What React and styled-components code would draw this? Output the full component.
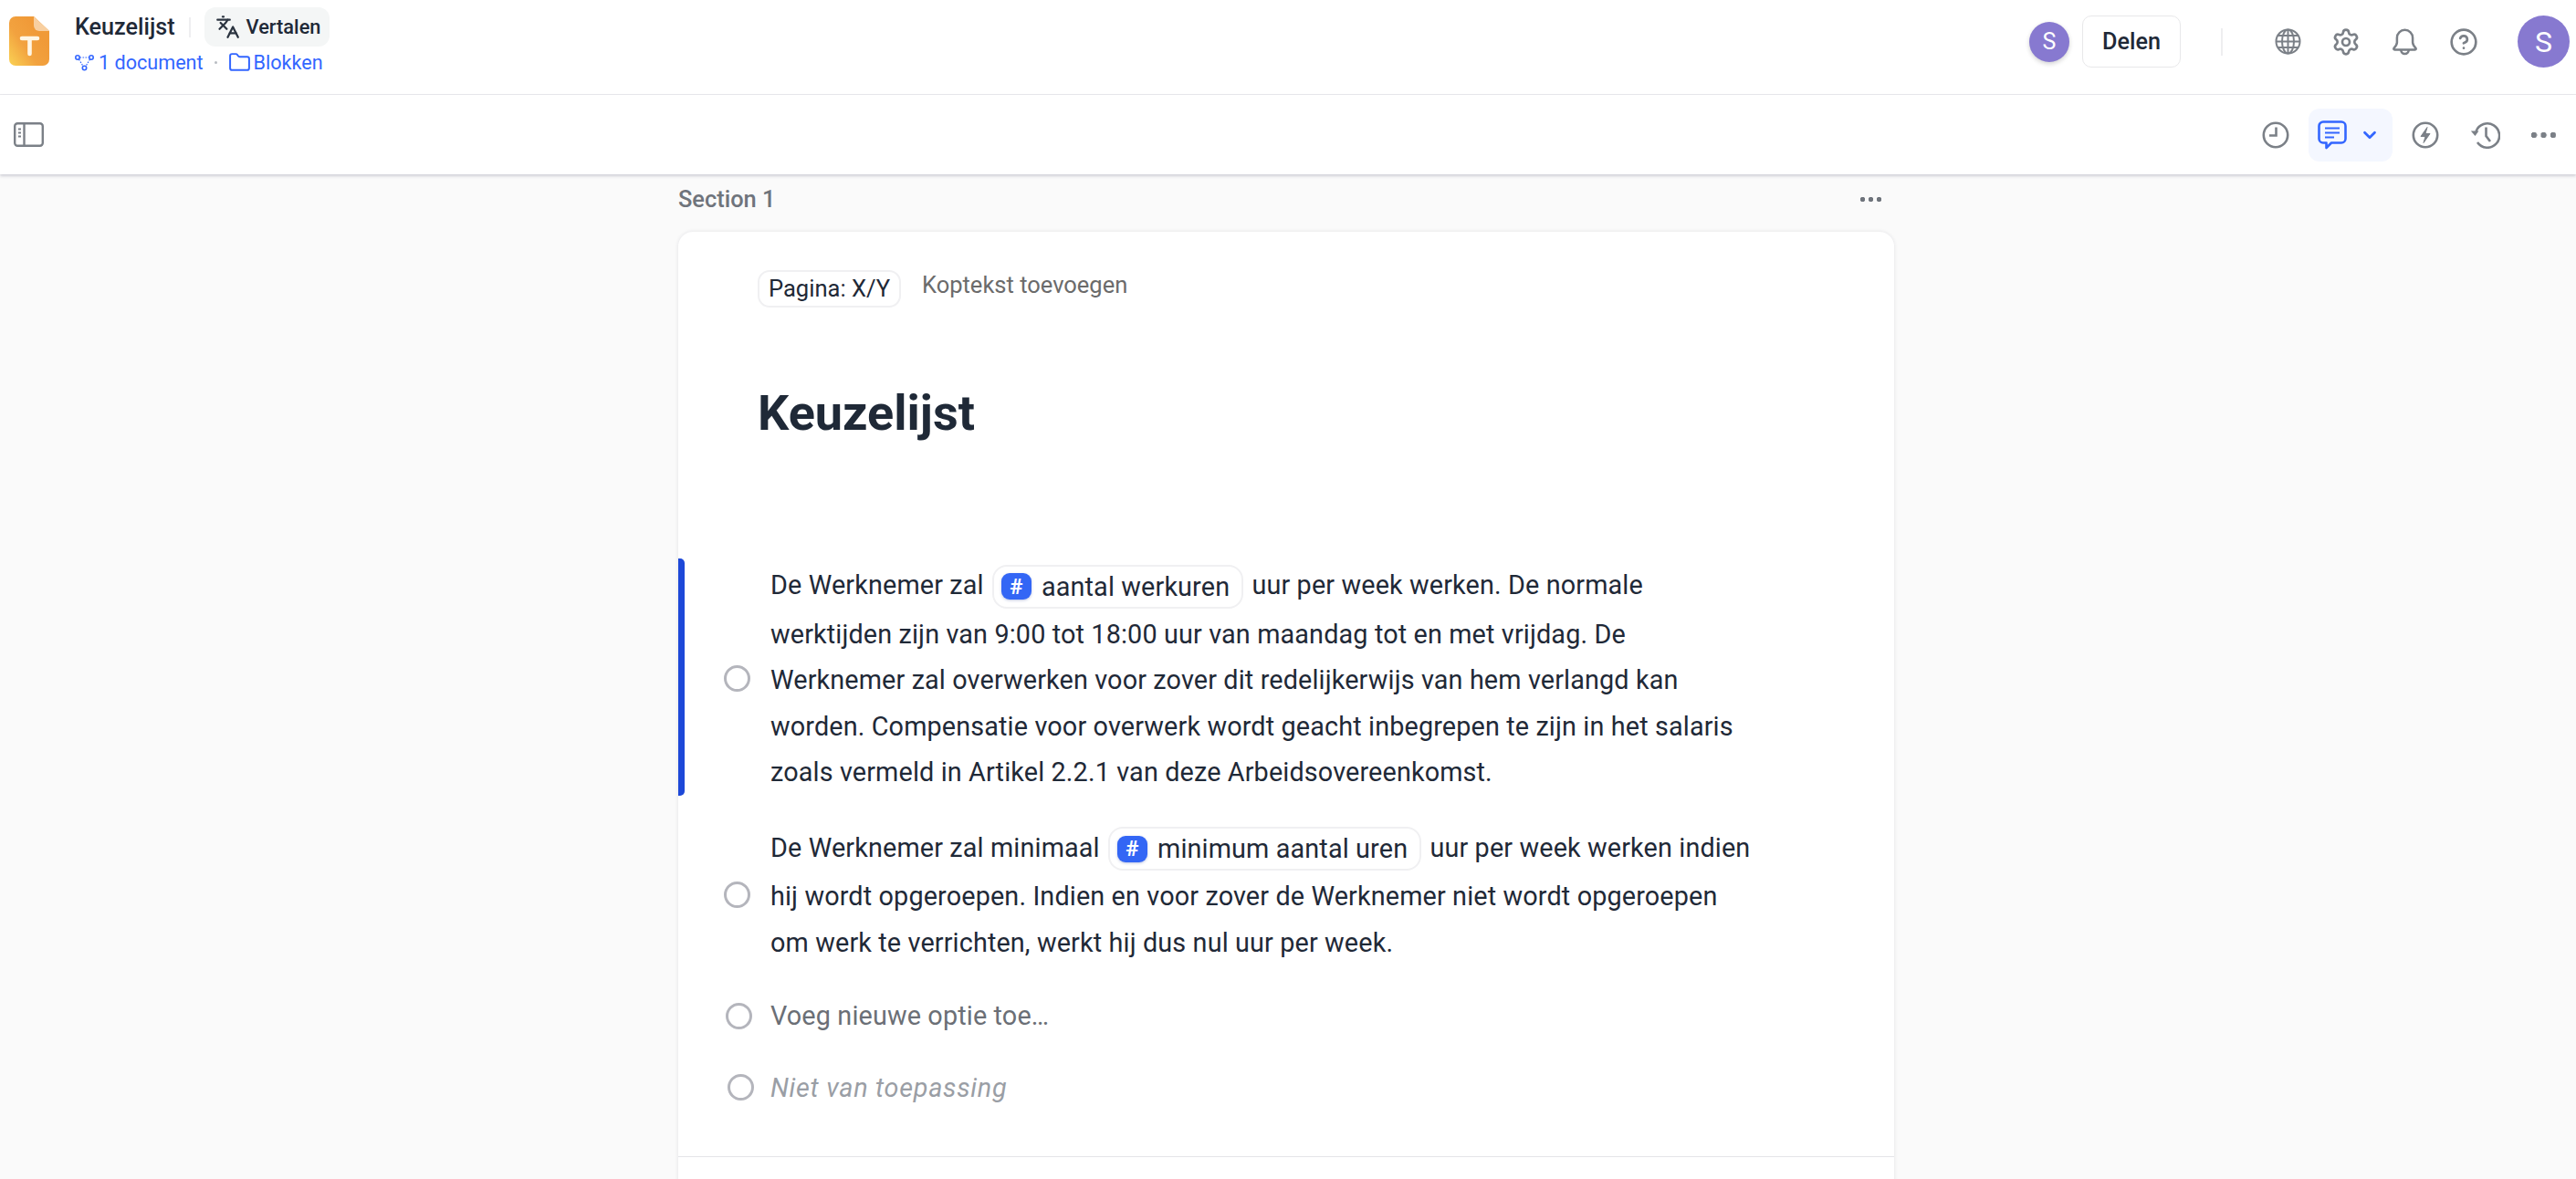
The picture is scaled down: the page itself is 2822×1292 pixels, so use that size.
import React from "react";
import styled, { createGlobalStyle } from "styled-components";
import { Settings, CircleHelp, Folder, Languages, ChevronDown } from "lucide-react";

const GlobalStyle = createGlobalStyle`
html, body {
    margin: 0;
    padding: 0;
    background: #FAFAFA;
    font-family: Roboto, "Liberation Sans", sans-serif;
    color: #1F2937;
}
body {
    height: 1292px;
    overflow: hidden;
}
* {
    box-sizing: border-box;
}
`

function LogoIcon() {
    return (
        <svg width="44" height="54" viewBox="0 0 44 54">
            <defs>
                <linearGradient id="logoFill" x1="0" y1="1" x2="0.75" y2="0.35">
                    <stop offset="0" stopColor="#FAD254" />
                    <stop offset="0.55" stopColor="#F2A23F" />
                    <stop offset="1" stopColor="#F09A38" />
                </linearGradient>
            </defs>
            <path d="M7 0H27L44 16V47a7 7 0 0 1-7 7H7a7 7 0 0 1-7-7V7a7 7 0 0 1 7-7Z" fill="url(#logoFill)" />
            <path d="M27 0L44 16H33a6 6 0 0 1-6-6Z" fill="#F8CFA0" />
            <path d="M14 24H31M22.5 24V41" stroke="#FFF6E4" strokeWidth="4.6" strokeLinecap="round" fill="none" />
        </svg>
    )
}

function NodesIcon() {
    return (
        <svg width="21" height="19" viewBox="0 0 21 19" fill="none" stroke="#3366FF" strokeWidth="1.6">
            <circle cx="3" cy="4" r="2.2" />
            <circle cx="18" cy="4" r="2.2" />
            <circle cx="10.5" cy="15.5" r="2.2" />
            <path d="M5.5 4H15.5M4.5 6L9 13.5M16.5 6L12 13.5" strokeDasharray="1.6 1.4" strokeWidth="1.2" />
        </svg>
    )
}

function PanelIcon() {
    return (
        <svg width="33" height="27" viewBox="0 0 33 27" fill="none" stroke="#7B8087" strokeWidth="2.4">
            <rect x="1.2" y="1.2" width="30.6" height="24.6" rx="3" />
            <path d="M11.5 1.5V25.5" />
            <path d="M5 7.5H8M5 11.5H8M5 15.5H8" strokeWidth="1.8" />
        </svg>
    )
}

function GlobeIcon() {
    return (
        <svg width="29" height="29" viewBox="0 0 29 29" fill="none" stroke="#7B8087" strokeWidth="2">
            <circle cx="14.5" cy="14.5" r="13" />
            <ellipse cx="14.5" cy="14.5" rx="6.5" ry="13" />
            <path d="M14.5 1.5V27.5M1.5 14.5H27.5M3.5 8H25.5M3.5 21H25.5" />
        </svg>
    )
}

function BellIcon() {
    return (
        <svg width="31" height="30" viewBox="-1.5 0 31 30" fill="none" stroke="#7B8087" strokeWidth="2.5" strokeLinejoin="round">
            <path d="M14 1.8a8.6 8.6 0 0 0-8.6 8.6v5.2c0 2.4-1.4 4-3.2 6-.8.9-.4 1.9.7 1.9h22.2c1.1 0 1.5-1 .7-1.9-1.8-2-3.2-3.6-3.2-6v-5.2A8.6 8.6 0 0 0 14 1.8Z" />
            <path d="M9.8 23.8a4.2 4.2 0 0 0 8.4 0" />
        </svg>
    )
}

function ClockIcon() {
    return (
        <svg width="30" height="30" viewBox="0 0 30 30" fill="none" stroke="#7B8087" strokeWidth="2.6">
            <circle cx="15" cy="15" r="13.2" />
            <path d="M15.5 6.5V15.5H8" />
        </svg>
    )
}

function CommentIcon() {
    return (
        <svg width="32" height="32" viewBox="0 0 32 32" fill="none" stroke="#3366FF" strokeWidth="2.6" strokeLinejoin="round">
            <path d="M6 1.5H26a4.5 4.5 0 0 1 4.5 4.5V20a4.5 4.5 0 0 1-4.5 4.5H15L9.5 30V24.5H6A4.5 4.5 0 0 1 1.5 20V6A4.5 4.5 0 0 1 6 1.5Z" />
            <path d="M8 8.5H24M8 13.5H24M8 18.5H18" strokeWidth="2" />
        </svg>
    )
}

function BoltIcon() {
    return (
        <svg width="30" height="30" viewBox="0 0 30 30" fill="none" stroke="#7B8087" strokeWidth="2.6">
            <circle cx="15" cy="15" r="13.2" />
            <path d="M17 6.5L10 16.5H15L13 23.5L20 13.5H15Z" fill="#7B8087" strokeWidth="1" strokeLinejoin="round" />
        </svg>
    )
}

function HistoryIcon() {
    return (
        <svg width="33" height="30" viewBox="0 0 33 30" fill="none" stroke="#7B8087" strokeWidth="2.6">
            <path d="M6.5 11A13.2 13.2 0 1 1 8 23" />
            <path d="M0.8 10.5H9.5L5.5 16Z" fill="#7B8087" stroke="none" />
            <path d="M17.5 6.5V16L22 22" />
        </svg>
    )
}

export default function App() {
    return (
        <>
        <GlobalStyle />
        <Header>
            <LogoSlot><LogoIcon /></LogoSlot>
            <TitleBlock>
                <TitleRow>
                    <Title>Keuzelijst</Title>
                    <VerticalLine />
                    <TranslateButton>
                        <Languages size={27} color="#2B3440" strokeWidth={2} />
                        Vertalen
                    </TranslateButton>
                </TitleRow>
                <LinkRow>
                    <NodesIcon />
                    <LinkText>1 document</LinkText>
                    <Dot />
                    <Folder size={25} color="#3366FF" strokeWidth={1.9} />
                    <FolderText>Blokken</FolderText>
                </LinkRow>
            </TitleBlock>
            <HeaderRight>
                <SmallAvatar>S</SmallAvatar>
                <ShareButton>Delen</ShareButton>
                <HeaderDivider />
                <HeaderIcons>
                    <GlobeIcon />
                    <Settings size={32} color="#7B8087" strokeWidth={2} />
                    <BellIcon />
                    <CircleHelp size={32} color="#7B8087" strokeWidth={2} />
                </HeaderIcons>
                <BigAvatar>S</BigAvatar>
            </HeaderRight>
        </Header>

        <Toolbar>
            <PanelIcon />
            <ToolbarRight>
                <ClockIcon />
                <CommentButton>
                    <CommentIcon />
                    <ChevronDown size={22} color="#3366FF" strokeWidth={3} />
                </CommentButton>
                <BoltIcon />
                <HistoryIcon />
                <MoreDots />
            </ToolbarRight>
        </Toolbar>

        <Canvas>
            <SectionRow>
                <SectionName>Section 1</SectionName>
                <SectionDots />
            </SectionRow>
            <Card>
                <HeaderLine>
                    <PagePill>Pagina: X/Y</PagePill>
                    <HeaderHint>Koptekst toevoegen</HeaderHint>
                </HeaderLine>
                <Heading>Keuzelijst</Heading>

                <Option $active $top={127}>
                    <Radio />
                    <OptionText>
                        De Werknemer zal <Chip><Hash>#</Hash>aantal werkuren</Chip> uur per week werken. De normale<br />
                        werktijden zijn van 9:00 tot 18:00 uur van maandag tot en met vrijdag. De<br />
                        Werknemer zal overwerken voor zover dit redelijkerwijs van hem verlangd kan<br />
                        worden. Compensatie voor overwerk wordt geacht inbegrepen te zijn in het salaris<br />
                        zoals vermeld in Artikel 2.2.1 van deze Arbeidsovereenkomst.
                    </OptionText>
                </Option>

                <Option $top={32}>
                    <Radio />
                    <OptionText>
                        De Werknemer zal minimaal <Chip><Hash>#</Hash>minimum aantal uren</Chip> uur per week werken indien<br />
                        hij wordt opgeroepen. Indien en voor zover de Werknemer niet wordt opgeroepen<br />
                        om werk te verrichten, werkt hij dus nul uur per week.
                    </OptionText>
                </Option>

                <Option $top={30}>
                    <Radio $nudge={2} />
                    <AddText>Voeg nieuwe optie toe…</AddText>
                </Option>

                <Option $top={28}>
                    <Radio $nudge={4} />
                    <NotApplicable>Niet van toepassing</NotApplicable>
                </Option>

                <CardDivider />
            </Card>
        </Canvas>
        </>
    )
}

const Header = styled.header`
height: 104px;
background: #FFFFFF;
border-bottom: 1px solid #E9E9EC;
display: flex;
align-items: flex-start;
padding-left: 10px;
`

const LogoSlot = styled.div`
width: 72px;
padding-top: 18px;
line-height: 0;
`

const TitleBlock = styled.div`
display: flex;
flex-direction: column;
`

const TitleRow = styled.div`
display: flex;
align-items: center;
height: 43px;
margin-top: 8px;
`

const Title = styled.span`
font-size: 25.2px;
font-weight: 500;
color: #1F2937;
`

const VerticalLine = styled.span`
width: 2px;
height: 22px;
background: #EEEEF0;
margin: 0 15px;
`

const TranslateButton = styled.div`
height: 43px;
padding: 0 10px 0 12px;
border-radius: 12px;
background: #F4F6F6;
display: flex;
align-items: center;
gap: 7px;
font-size: 21.8px;
font-weight: 500;
color: #1F2937;
`

const LinkRow = styled.div`
display: flex;
align-items: center;
height: 30px;
margin-top: 2px;
color: #3366FF;
font-size: 21.6px;
`

const LinkText = styled.span`
margin-left: 5px;
`

const FolderText = styled.span`
margin-left: 3px;
`

const Dot = styled.span`
width: 3px;
height: 3px;
border-radius: 50%;
background: #B8BCC2;
margin: 0 12px 0 12px;
`

const HeaderRight = styled.div`
margin-left: auto;
display: flex;
align-items: center;
height: 91px;
padding-right: 7px;
`

const SmallAvatar = styled.div`
width: 44px;
height: 44px;
border-radius: 50%;
background: #8779D0;
color: #FFFFFF;
font-size: 25px;
display: flex;
align-items: center;
justify-content: center;
box-shadow: 0 2px 5px rgba(0, 0, 0, 0.18);
`

const ShareButton = styled.button`
width: 108px;
height: 57px;
margin-left: 14px;
border: 1.5px solid #E8E8EA;
border-radius: 10px;
background: #FFFFFF;
font-family: inherit;
font-size: 25.2px;
font-weight: 500;
color: #1F2937;
`

const HeaderDivider = styled.span`
width: 2px;
height: 30px;
background: #EEEEF0;
margin-left: 44px;
`

const HeaderIcons = styled.div`
display: flex;
align-items: center;
gap: 33px;
margin-left: 57px;
`

const BigAvatar = styled.div`
width: 57px;
height: 57px;
margin-left: 43px;
border-radius: 50%;
background: #8779D0;
color: #FFFFFF;
font-size: 32px;
display: flex;
align-items: center;
justify-content: center;
`

const Toolbar = styled.div`
position: relative;
height: 87px;
background: #FFFFFF;
display: flex;
align-items: center;
justify-content: space-between;
padding: 0 22px 0 15px;
box-shadow: 0 2px 3px rgba(60, 60, 90, 0.22);
`

const ToolbarRight = styled.div`
display: flex;
align-items: center;
gap: 34px;
`

const CommentButton = styled.div`
width: 92px;
height: 58px;
margin: 0 -13px;
border-radius: 12px;
background: #F4F7FF;
display: flex;
align-items: center;
padding-left: 10px;
gap: 14px;
`

const MoreDots = styled.span`
display: block;
width: 27px;
height: 6px;
background: radial-gradient(circle at 3px 3px, #7B8087 3px, transparent 3.6px) 0 0 / 10.5px 6px repeat-x;
`

const SectionDots = styled.span`
display: block;
width: 23px;
height: 5px;
background: radial-gradient(circle at 2.5px 2.5px, #6F747C 2.5px, transparent 3px) 0 0 / 9px 5px repeat-x;
`

const Canvas = styled.main`
margin-left: 743px;
width: 1332px;
`

const SectionRow = styled.div`
display: flex;
align-items: center;
justify-content: space-between;
height: 63px;
padding: 0 14px 9px 0;
`

const SectionName = styled.span`
font-size: 25.4px;
font-weight: 500;
color: #6F747C;
`

const Card = styled.section`
position: relative;
background: #FFFFFF;
border-radius: 16px 16px 0 0;
box-shadow: 0 0 4px rgba(40, 40, 60, 0.11);
padding-top: 42px;
height: 1100px;
`

const HeaderLine = styled.div`
display: flex;
align-items: flex-start;
padding-left: 87px;
gap: 23px;
`

const PagePill = styled.span`
height: 41px;
width: 157px;
border: 2px solid #F0F0F2;
border-radius: 13px;
font-size: 25.6px;
color: #1F2937;
display: flex;
align-items: center;
justify-content: center;
padding-bottom: 2px;
`

const HeaderHint = styled.span`
font-size: 25.5px;
color: #6B6B6B;
line-height: 32px;
`

const Heading = styled.h1`
margin: 84px 0 0 87px;
font-size: 54px;
line-height: 64px;
font-weight: 700;
color: #1F2937;
`

const Option = styled.div`
position: relative;
display: flex;
align-items: center;
margin-top: ${({ $top }) => $top}px;
padding-left: 50px;
${({ $active }) => ($active ? "padding-top: 4px; padding-bottom: 0;" : "")}

${({ $active }) => $active && `
&::before {
    content: "";
    position: absolute;
    left: 0;
    top: 0;
    bottom: 0;
    width: 7px;
    background: #1D48D8;
    border-radius: 0 5px 5px 0;
}
`}
`

const Radio = styled.span`
width: 29px;
height: 29px;
flex-shrink: 0;
border: 3px solid #B4B5BC;
border-radius: 50%;
margin-left: ${({ $nudge }) => $nudge || 0}px;
margin-right: ${({ $nudge }) => 23 - ($nudge || 0)}px;
`

const OptionText = styled.p`
margin: 0 0 0 -1px;
font-size: 28.8px;
line-height: 50.4px;
letter-spacing: 0.13px;
color: #1F2937;
white-space: nowrap;
`

const Chip = styled.span`
display: inline-flex;
align-items: center;
height: 48px;
vertical-align: middle;
margin: 2px 2px 3px 2px;
padding: 0 13px 0 8px;
border: 2px solid #F0F0F2;
border-radius: 16px;
`

const Hash = styled.span`
width: 33px;
height: 29px;
margin-right: 11px;
border-radius: 9px;
background: #3366F5;
color: #FFFFFF;
font-size: 24px;
font-weight: 700;
display: flex;
align-items: center;
justify-content: center;
box-shadow: 0 1px 3px rgba(30, 60, 160, 0.3);
`

const AddText = styled.span`
margin-left: -1px;
font-size: 28.8px;
line-height: 50.4px;
letter-spacing: 0.13px;
color: #6B6F76;
`

const NotApplicable = styled.span`
margin-left: -1px;
font-size: 28.8px;
line-height: 50.4px;
letter-spacing: 0.7px;
font-style: italic;
color: #9A9EA5;
`

const CardDivider = styled.hr`
margin: 50px 0 0 0;
border: none;
border-top: 1.5px solid #E5E5E8;
`
